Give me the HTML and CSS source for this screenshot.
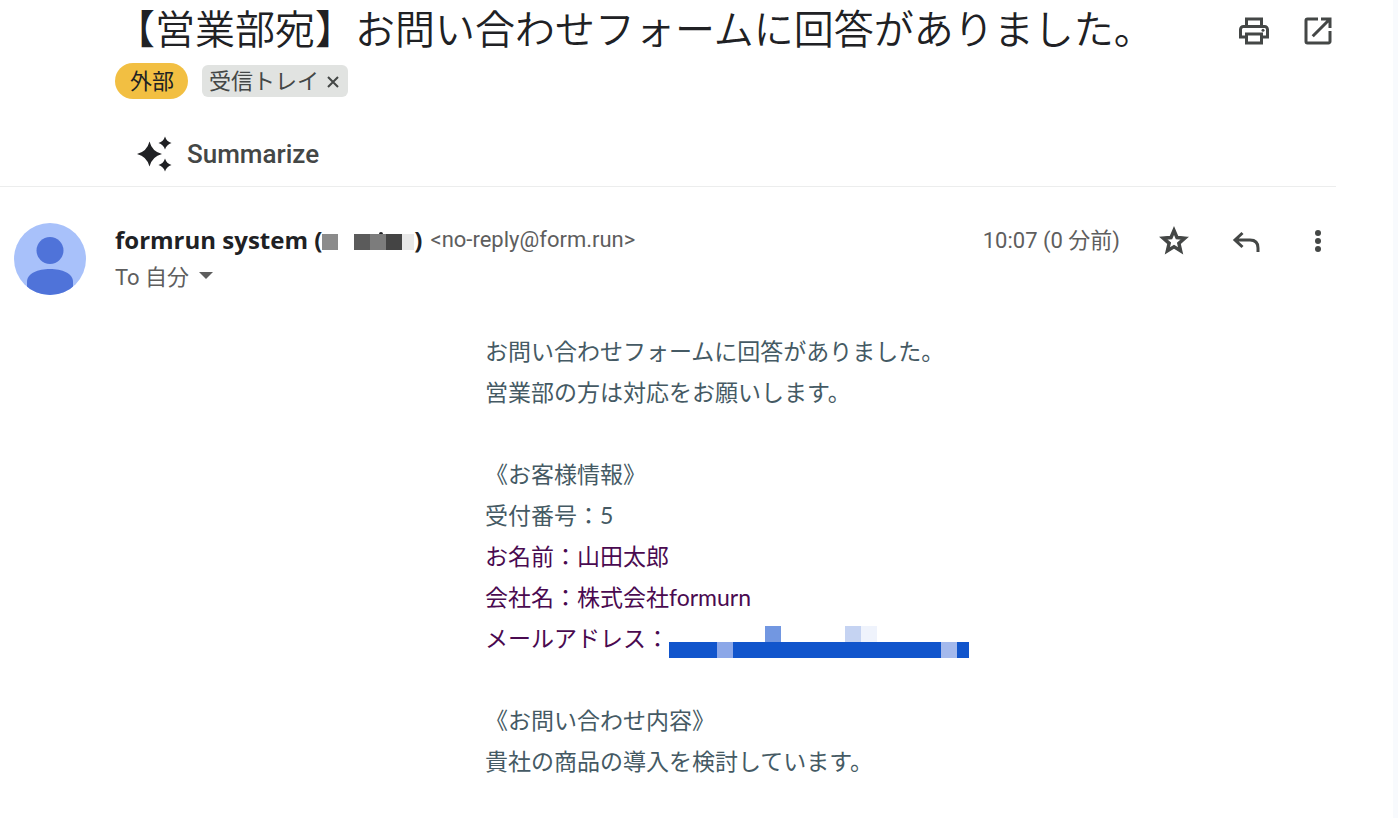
FILE: index.html
```html
<!DOCTYPE html>
<html lang="ja">
<head>
    <meta charset="UTF-8">
    <meta name="viewport" content="width=device-width, initial-scale=1.0">
    <title>【営業部宛】お問い合わせフォームに回答がありました。</title>
    <link rel="stylesheet" href="styles.css">
</head>
<body>
    <main class="mail">
        <header class="mail-header">
            <div class="subject-row">
                <h1>【営業部宛】お問い合わせフォームに回答がありました。</h1>
                <div class="subject-actions">
                    <button class="icon-btn" type="button" aria-label="印刷">
                        <svg width="36" height="36" viewBox="0 0 24 24"><path d="M19 8h-1V3H6v5H5c-1.660 0-3 1.340-3 3v6h4v4h12v-4h4v-6c0-1.660-1.340-3-3-3zM8 5h8v3H8V5zm8 14H8v-4h8v4zm2-4v-2H6v2H4v-4c0-.55.45-1 1-1h14c.55 0 1 .45 1 1v4h-2z"/><circle cx="18" cy="11.500" r="1"/></svg>
                    </button>
                    <button class="icon-btn" type="button" aria-label="新しいウィンドウで開く">
                        <svg width="36" height="36" viewBox="0 0 24 24"><path d="M19 19H5V5h7V3H5a2 2 0 0 0-2 2v14a2 2 0 0 0 2 2h14c1.100 0 2-.9 2-2v-7h-2v7zM14 3v2h3.590l-9.830 9.830 1.410 1.410L19 6.410V10h2V3h-7z"/></svg>
                    </button>
                </div>
            </div>
            <div class="labels">
                <span class="label external">外部</span>
                <span class="label inbox">受信トレイ
                    <button type="button" aria-label="ラベルを削除">
                        <svg width="12" height="12" viewBox="0 0 12 12"><path d="M1 1l10 10M11 1L1 11"/></svg>
                    </button>
                </span>
            </div>
            <button class="summarize" type="button">
                <svg width="36" height="36" viewBox="0 0 36 36"><path d="M12.500 5.500Q15 15.500 25 18Q15 20.500 12.500 30.500Q10 20.500 0 18Q10 15.500 12.500 5.500zM28 .5Q29.500 5.500 34.500 7Q29.500 8.500 28 13.500Q26.500 8.500 21.500 7Q26.500 5.500 28 .5zM28 22.500Q29.500 27.500 34.500 29Q29.500 30.500 28 35.500Q26.500 30.500 21.500 29Q26.500 27.500 28 22.500z"/></svg>
                Summarize
            </button>
        </header>

        <section class="sender">
            <svg class="avatar" width="72" height="72" viewBox="0 0 72 72">
                <clipPath id="avatar-clip"><circle cx="36" cy="36" r="36"/></clipPath>
                <g clip-path="url(#avatar-clip)">
                    <rect width="72" height="72" fill="#a8c1fa"/>
                    <circle cx="36" cy="27.500" r="13.500" fill="#4f73d9"/>
                    <path d="M13 72V59C13 50 24 46 36 46S59 50 59 59V72z" fill="#4f73d9"/>
                </g>
            </svg>
            <div class="sender-info">
                <div class="from">
                    <strong>formrun system (<svg class="mask" width="92" height="20" viewBox="0 0 92 20">
                        <circle cx="59" cy="4" r="2" fill="#202124"/>
                        <path d="M0 4h16v16H0z" fill="#8b8b8b"/>
                        <path d="M32 4h16v16H32z" fill="#5b5b5b"/>
                        <path d="M48 4h16v16H48z" fill="#7c7c7c"/>
                        <path d="M64 4h16v16H64z" fill="#444"/>
                        <path d="M80 4h12v16H80z" fill="#e8e8e8"/>
                    </svg>)</strong>
                    <span class="address">&lt;no-reply@form.run&gt;</span>
                </div>
                <button class="recipient" type="button">
                    To 自分
                    <svg width="14" height="7" viewBox="0 0 14 7"><path d="M0 0h14L7 7z"/></svg>
                </button>
            </div>
            <time class="time">10:07 (0 分前)</time>
            <div class="mail-actions">
                <button class="icon-btn" type="button" aria-label="スター">
                    <svg class="star" width="32" height="32" viewBox="0 0 24 24"><path d="M22 9.240l-7.190-.62L12 2 9.190 8.630 2 9.240l5.460 4.730L5.820 21 12 17.270 18.180 21l-1.630-7.030L22 9.240zM12 15.400l-3.760 2.270 1-4.280-3.320-2.880 4.380-.38L12 6.100l1.710 4.040 4.380.38-3.320 2.880 1 4.280L12 15.400z"/></svg>
                </button>
                <button class="icon-btn" type="button" aria-label="返信">
                    <svg class="reply" width="32" height="32" viewBox="0 0 32 32"><path d="M12.500 8L5 15l7.500 7M5 15h15q8 0 8 8v4"/></svg>
                </button>
                <button class="icon-btn" type="button" aria-label="その他">
                    <svg width="32" height="32" viewBox="0 0 32 32"><circle cx="16" cy="8" r="3"/><circle cx="16" cy="16" r="3"/><circle cx="16" cy="24" r="3"/></svg>
                </button>
            </div>
        </section>

        <article class="message">
            <p>お問い合わせフォームに回答がありました。<br>
            営業部の方は対応をお願いします。</p>
            <p>《お客様情報》<br>
            受付番号：5<br>
            <span class="quoted">お名前：山田太郎<br>
            会社名：株式会社formurn<br>
            メールアドレス：<svg class="mail-mask" width="300" height="32" viewBox="0 0 300 32">
                <path d="M0 16h300v16H0z" fill="#1155cc"/>
                <path d="M48 16h16v16H48z" fill="#8ba7e8"/>
                <path d="M272 16h16v16h-16z" fill="#a4b9ec"/>
                <path d="M96 0h16v16H96z" fill="#7297e1"/>
                <path d="M176 0h16v16h-16z" fill="#c5d3f2"/>
                <path d="M192 0h16v16h-16z" fill="#eff3fc"/>
            </svg></span></p>
            <p>《お問い合わせ内容》<br>
            貴社の商品の導入を検討しています。</p>
        </article>
    </main>
</body>
</html>
```
FILE: styles.css
```css
* {
    box-sizing: border-box;
}

body {
    margin: 0;
    background: #f8fafd;
    font-family: Roboto, 'Noto Sans CJK JP', sans-serif;
    color: #202124;
}

button {
    border: none;
    padding: 0;
    background: none;
    font: inherit;
    color: inherit;
    cursor: pointer;
}

svg {
    flex-shrink: 0;
    fill: currentColor;
}

.mail {
    min-height: 100vh;
    margin-right: 5px;
    background: #fff;
}

.mail-header {
    margin-right: 57px;
    padding-left: 115px;
    border-bottom: 1px solid #eceded;
}

.subject-row {
    display: flex;
    justify-content: space-between;
    height: 60px;
}

h1 {
    margin: 0;
    font-family: 'Noto Sans CJK JP', sans-serif;
    font-size: 40px;
    font-weight: 350;
    line-height: 54px;
    white-space: nowrap;
}

.subject-actions {
    display: flex;
    align-items: center;
    gap: 28px;
    padding-top: 2px;
}

.icon-btn {
    display: flex;
    color: #444746;
}

.labels {
    display: flex;
    align-items: center;
    gap: 14px;
    height: 42px;
    font-size: 22px;
}

.label {
    display: flex;
    align-items: center;
    padding-bottom: 4px;
}

.external {
    height: 36px;
    padding-left: 15px;
    padding-right: 14px;
    border-radius: 18px;
    background: #f2bf42;
}

.inbox {
    gap: 8px;
    height: 32px;
    padding-left: 7px;
    padding-right: 9px;
    border-radius: 6px;
    background: #e1e3e1;
    color: #444746;
}

.inbox button {
    padding-top: 6px;
}

.inbox svg {
    display: block;
    stroke: currentColor;
    stroke-width: 2;
}

.summarize {
    display: flex;
    align-items: center;
    gap: 14px;
    margin: 34px 0 14px 22px;
    font-size: 26px;
    font-weight: 500;
    color: #444746;
}

.summarize svg {
    color: #202124;
}

.sender {
    display: flex;
    align-items: flex-start;
    padding: 36px 59px 0 14px;
    color: #5e5e5e;
}

.sender-info {
    flex: 1;
    margin-left: 29px;
}

.from {
    display: flex;
    align-items: center;
    gap: 8px;
    height: 34px;
    font-size: 22px;
    line-height: 34px;
}

.from strong {
    font-family: 'Open Sans', sans-serif;
    font-size: 24px;
    color: #202124;
}

.mask {
    vertical-align: -1px;
}

.recipient {
    display: flex;
    align-items: center;
    gap: 10px;
    height: 36px;
    font-size: 22px;
}

.time {
    font-size: 22px;
    line-height: 36px;
}

.mail-actions {
    display: flex;
    align-items: center;
    gap: 40px;
    height: 36px;
    margin-left: 38px;
}

.star {
    stroke: currentColor;
    stroke-width: 1;
}

.reply {
    fill: none;
    stroke: currentColor;
    stroke-width: 3;
}

.message {
    padding: 36px 40px 36px 485px;
    font-family: Lato, 'Noto Sans CJK JP', sans-serif;
    font-size: 23px;
    line-height: 41px;
    color: #455a64;
}

.message p {
    margin: 0 0 41px;
}

.message p:last-child {
    margin-bottom: 0;
}

.quoted {
    color: #4a0a50;
}

.mail-mask {
    margin-top: -9px;
    vertical-align: -11px;
}
```
